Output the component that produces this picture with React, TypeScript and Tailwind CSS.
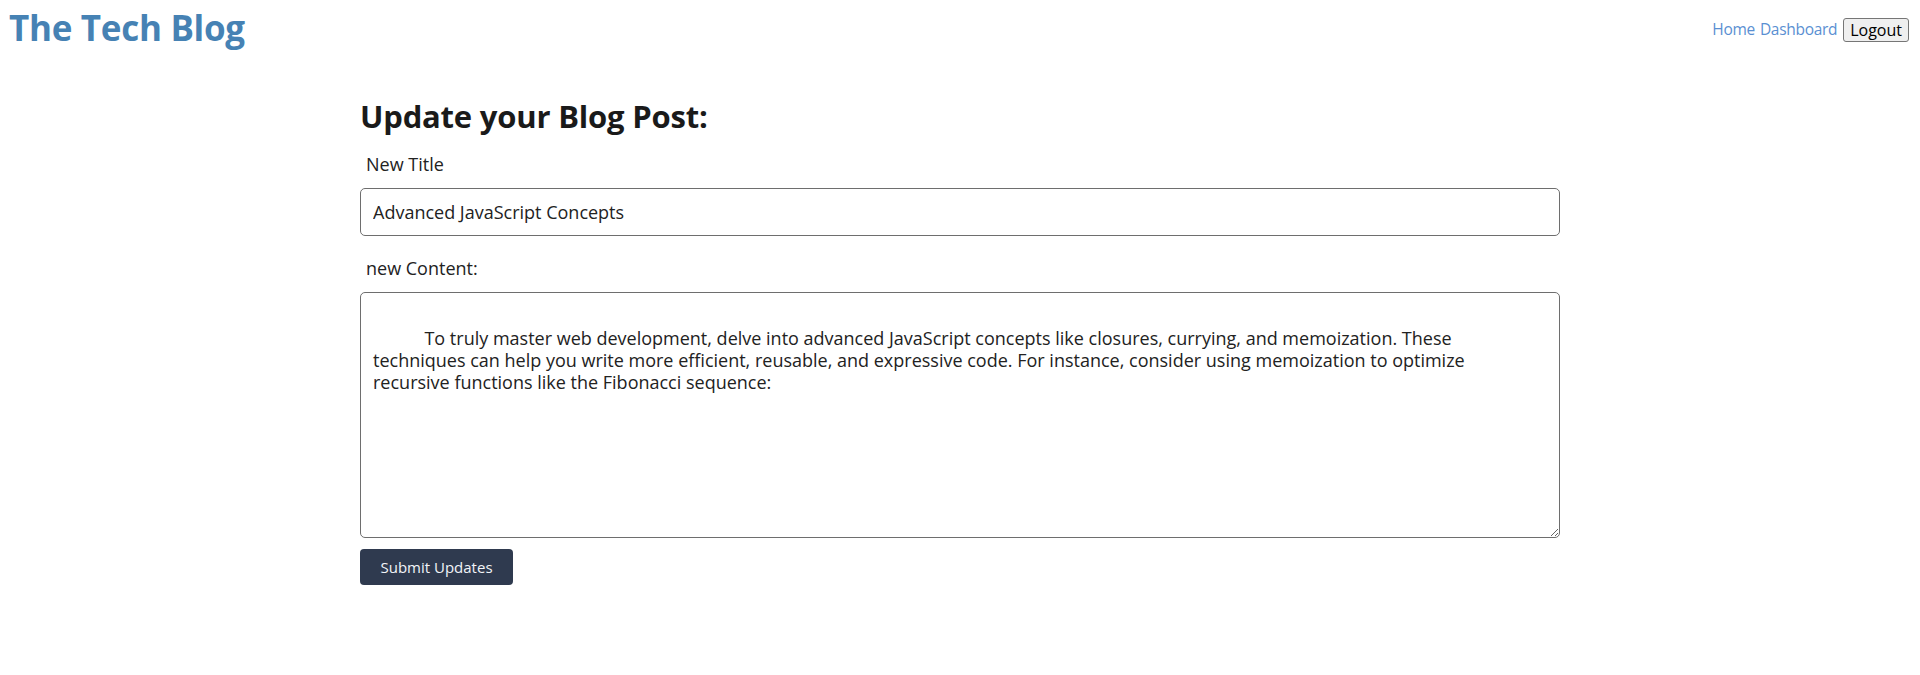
import React, { useState } from 'react';

const INITIAL_CONTENT =
  '\n           To truly master web development, delve into advanced JavaScript concepts like closures, currying, and memoization. These\n' +
  'techniques can help you write more efficient, reusable, and expressive code. For instance, consider using memoization to optimize\n' +
  'recursive functions like the Fibonacci sequence:';

export default function App() {
  const [title, setTitle] = useState('Advanced JavaScript Concepts');
  const [content, setContent] = useState(INITIAL_CONTENT);

  return (
    <div className="min-h-[675px] bg-white font-['Open_Sans','Noto_Sans',sans-serif] text-[#1f1f1f]">
      {/* Header */}
      <header className="flex items-start justify-between pl-[9px] pr-[11px]">
        <h1 className="pt-[5px] text-[35px] font-bold leading-[46px] tracking-[-0.3px] text-[#4682b4]">
          The Tech Blog
        </h1>
        <nav className="flex items-center gap-[5px] pt-[18px] text-[15.5px]">
          <a href="#" className="text-[#5a8fd2] tracking-[-0.3px]">
            Home
          </a>
          <a href="#" className="text-[#5a8fd2] tracking-[-0.3px]">
            Dashboard
          </a>
          <button
            type="button"
            className="ml-[1px] h-[24px] rounded-[3px] border border-[#767676] bg-[#efefef] px-[6px] text-[16px] leading-[20px] text-black"
          >
            Logout
          </button>
        </nav>
      </header>

      {/* Edit form */}
      <main className="mx-auto w-[1200px] pt-[47px]">
        <h2 className="text-[31px] font-bold leading-[36px] tracking-[-0.2px] text-[#1a1a1a]">
          Update your Blog Post:
        </h2>
        <form className="flex flex-col" onSubmit={e => e.preventDefault()}>
          <label htmlFor="title" className="mt-[19px] pl-[6px] text-[18px] leading-[22px] text-[#222]">
            New Title
          </label>
          <input
            id="title"
            value={title}
            onChange={e => setTitle(e.target.value)}
            className="mt-[13px] h-[48px] w-full rounded-[5px] border border-[#6e6e6e] px-[12px] text-[18px] text-[#222] outline-none"
          />
          <label htmlFor="content" className="mt-[21px] pl-[6px] text-[18px] leading-[22px] text-[#222]">
            new Content:
          </label>
          <textarea
            id="content"
            value={content}
            onChange={e => setContent(e.target.value)}
            className="mt-[13px] h-[246px] w-full rounded-[5px] border border-[#6e6e6e] px-[12px] pt-[12px] text-[18px] leading-[22px] text-[#222] outline-none"
          />
          <div className="mt-[11px]">
            <button
              type="submit"
              className="h-[36px] w-[153px] rounded-[4px] bg-[#2f3a4f] text-[15px] text-[#f2f4f8]"
            >
              Submit Updates
            </button>
          </div>
        </form>
      </main>
    </div>
  );
}
